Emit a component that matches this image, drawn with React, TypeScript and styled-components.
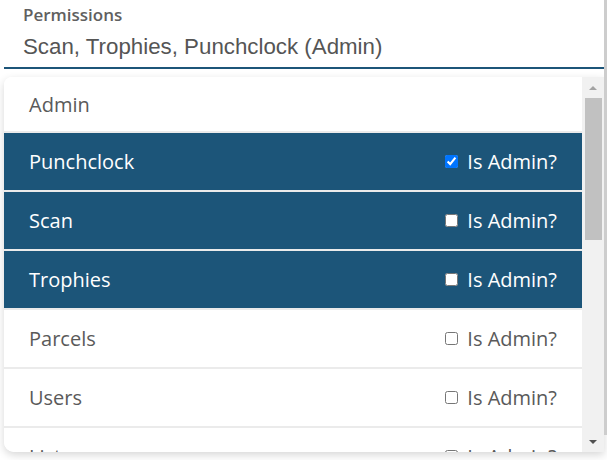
import React from "react";
import styled, { createGlobalStyle } from "styled-components";

const Global = createGlobalStyle`
  html, body { margin: 0; padding: 0; background: #ffffff; }
  body { font-family: "Open Sans", "Liberation Sans", sans-serif; overflow: hidden; }
`;

const Page = styled.div`
  display: flex;
  width: 607px;
  height: 460px;
`;

const Main = styled.div`
  width: 600px;
  margin-left: 4px;
  display: flex;
  flex-direction: column;
`;

const EdgeBar = styled.div`
  width: 3px;
  height: 435px;
  background: #cdcdcd;
`;

const Field = styled.div`
  padding: 4px 0 0 19px;
  height: 69px;
  box-sizing: border-box;
  border-bottom: 2px solid #1c5579;
`;

const Label = styled.div`
  font-family: "Open Sans", sans-serif;
  font-size: 17px;
  font-weight: 600;
  line-height: 22px;
  color: #606060;
`;

const Value = styled.div`
  font-family: "Liberation Sans", Arial, sans-serif;
  font-size: 22.3px;
  line-height: 41px;
  color: #555555;
`;

const Panel = styled.div`
  margin-top: 8px;
  height: 375px;
  display: flex;
  border-radius: 8px 0 0 10px;
  background: #ffffff;
  box-shadow: 0 3px 8px rgba(0, 0, 0, 0.16);
  overflow: hidden;
`;

const List = styled.div`
  flex: 1;
  overflow: hidden;
  display: flex;
  flex-direction: column;
`;

const Row = styled.div<{ $selected?: boolean; $height?: number }>`
  flex: none;
  height: ${(p) => p.$height ?? 57}px;
  border-bottom: 2px solid #ebebeb;
  display: flex;
  align-items: center;
  justify-content: space-between;
  padding: 0 25px 0 25px;
  background: ${(p) => (p.$selected ? "#1c5579" : "#ffffff")};
  color: ${(p) => (p.$selected ? "#ffffff" : "#5a5a5a")};
  font-size: 20px;
`;

const AdminToggle = styled.label`
  display: flex;
  align-items: center;
  gap: 9px;
`;

const Check = styled.input`
  margin: 0;
  width: 13px;
  height: 13px;
`;

const ScrollTrack = styled.div`
  width: 22px;
  background: #f1f1f1;
  display: flex;
  flex-direction: column;
  align-items: center;
`;

const Arrow = styled.div<{ $down?: boolean }>`
  height: 21px;
  width: 100%;
  display: flex;
  align-items: center;
  justify-content: center;
  &::before {
    content: "";
    width: 0;
    height: 0;
    border-left: 4px solid transparent;
    border-right: 4px solid transparent;
    ${(p) =>
      p.$down
        ? "border-top: 4px solid #505050;"
        : "border-bottom: 4px solid #a3a3a3;"}
  }
`;

const Thumb = styled.div`
  width: 17px;
  height: 142px;
  background: #c1c1c1;
`;

const Spacer = styled.div`
  flex: 1;
`;

const items = [
  { name: "Punchclock", selected: true, admin: true },
  { name: "Scan", selected: true, admin: false },
  { name: "Trophies", selected: true, admin: false },
  { name: "Parcels", selected: false, admin: false },
  { name: "Users", selected: false, admin: false },
  { name: "Lists", selected: false, admin: false },
];

export default function App() {
  return (
    <Page>
      <Global />
      <Main>
        <Field>
          <Label>Permissions</Label>
          <Value>Scan, Trophies, Punchclock (Admin)</Value>
        </Field>
        <Panel>
          <List>
            <Row $height={54}>Admin</Row>
            {items.map((it) => (
              <Row key={it.name} $selected={it.selected}>
                <span>{it.name}</span>
                <AdminToggle>
                  <Check type="checkbox" checked={it.admin} readOnly />
                  Is Admin?
                </AdminToggle>
              </Row>
            ))}
          </List>
          <ScrollTrack>
            <Arrow />
            <Thumb />
            <Spacer />
            <Arrow $down />
          </ScrollTrack>
        </Panel>
      </Main>
      <EdgeBar />
    </Page>
  );
}
